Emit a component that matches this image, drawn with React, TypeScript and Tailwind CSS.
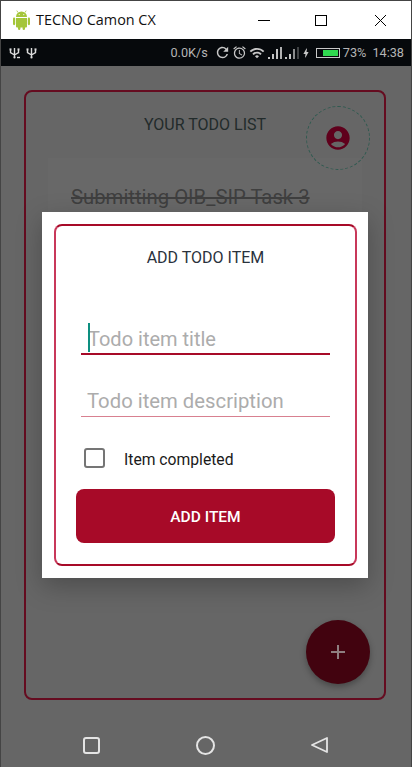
import { MdAccountCircle, MdAdd, MdAlarm, MdBolt, MdRefresh, MdWifi } from 'react-icons/md'

const ROBOTO = "font-['Roboto',sans-serif]"

function AndroidLogo() {
  return (
    <svg width="17" height="20" viewBox="0 0 17 20" className="text-[#a4c639]">
      <path d="M3 7a5.5 5.5 0 0 1 11 0z" fill="currentColor" />
      <path d="M5 2.5L3.8 .6M12 2.5L13.2 .6" stroke="currentColor" strokeWidth=".8" />
      <circle cx="6.2" cy="4.6" r=".6" fill="#fff" />
      <circle cx="10.8" cy="4.6" r=".6" fill="#fff" />
      <path d="M3 8h11v8.5a1 1 0 0 1-1 1H4a1 1 0 0 1-1-1z" fill="currentColor" />
      <rect x="0" y="7.6" width="2.2" height="7.6" rx="1.1" fill="currentColor" />
      <rect x="14.8" y="7.6" width="2.2" height="7.6" rx="1.1" fill="currentColor" />
      <rect x="5" y="15" width="2.4" height="5" rx="1.2" fill="currentColor" />
      <rect x="9.6" y="15" width="2.4" height="5" rx="1.2" fill="currentColor" />
    </svg>
  )
}

function UsbGlyph({ extra }: { extra?: boolean }) {
  return (
    <svg width="11" height="12" viewBox="0 0 11 12" fill="none" stroke="currentColor" strokeWidth="1.4">
      <path d="M5.5 1v9M5.5 8L1.5 5.5V3M5.5 8l4-2.5V3" />
      <circle cx="5.5" cy="10.4" r="1.1" fill="currentColor" stroke="none" />
      <rect x=".5" y="1.4" width="2" height="2" fill="currentColor" stroke="none" />
      <rect x="8.5" y="1.4" width="2" height="2" fill="currentColor" stroke="none" />
      {extra && <path d="M8 10.5h3" />}
    </svg>
  )
}

function SignalBars({ dim }: { dim?: boolean }) {
  return (
    <svg width="15" height="14" viewBox="0 0 15 14" className="text-[#c4c4c4]">
      <rect x="0" y="11" width="2" height="2" fill="currentColor" />
      <rect x="4" y="8" width="2" height="5" fill="currentColor" />
      <rect x="8" y="3" width="2" height="10" fill="currentColor" opacity={dim ? 0.7 : 1} />
      <rect x="12" y="1" width="2" height="12" fill="currentColor" opacity={dim ? 0.3 : 0.9} />
    </svg>
  )
}

function TitleBar() {
  return (
    <div className="flex h-[38px] shrink-0 items-center bg-white pl-[12px]">
      <AndroidLogo />
      <span className="ml-[6px] font-['Open_Sans',sans-serif] text-[14.4px] text-[#111]">TECNO Camon CX</span>
      <div className="ml-auto flex items-center pr-[24px]">
        <span className="h-px w-[12px] bg-black" />
        <span className="ml-[45px] h-[11px] w-[12px] border border-black" />
        <svg width="13" height="13" viewBox="0 0 13 13" className="ml-[47px] text-black">
          <path d="M1 1l11 11M12 1L1 12" stroke="currentColor" strokeWidth="1" />
        </svg>
      </div>
    </div>
  )
}

function StatusBar() {
  return (
    <div className={`flex h-[27px] shrink-0 items-center bg-[#06090c] pl-[8px] pr-[7px] text-[12.7px] text-[#b5b5b5] ${ROBOTO}`}>
      <span className="text-[#dcdcdc]">
        <UsbGlyph extra />
      </span>
      <span className="ml-[6px] text-[#dcdcdc]">
        <UsbGlyph />
      </span>
      <span className="ml-auto">0.0K/s</span>
      <MdRefresh className="ml-[6px] h-[17px] w-[17px] text-[#c8c8c8]" />
      <MdAlarm className="ml-px h-[15px] w-[15px] text-[#c8c8c8]" />
      <MdWifi className="ml-[2px] h-[16px] w-[16px] text-[#c8c8c8]" />
      <span className="ml-[3px]">
        <SignalBars />
      </span>
      <span className="ml-[2px]">
        <SignalBars dim />
      </span>
      <MdBolt className="h-[14px] w-[12px] text-[#c8c8c8]" />
      <span className="ml-[4px] flex h-[10px] w-[24px] items-stretch border border-[#c8c8c8] p-px">
        <span className="w-[5px]" />
        <span className="flex-1 bg-[#2fd94f]" />
      </span>
      <span className="ml-[3px]">73%</span>
      <span className="ml-[6px]">14:38</span>
    </div>
  )
}

function TodoScreen() {
  return (
    <div className="min-h-0 flex-1 pl-[23px] pr-[25px] pt-[24px]">
      <div className="relative h-[610px] rounded-[8px] border-2 border-[#650c20] px-[22px] pt-[21px]">
        <p className={`text-center text-[16px] leading-[24px] text-[#222b2b] ${ROBOTO}`}>YOUR TODO LIST</p>
        <button className="absolute right-[14px] top-[14px] flex h-[64px] w-[64px] items-center justify-center rounded-full border border-dashed border-[#2f5a50]">
          <MdAccountCircle className="h-[28px] w-[28px] text-[#5f001c]" />
        </button>
        <div className="mt-[21px] h-[200px] bg-[#686868] pl-[23px] pt-[25px]">
          <p className={`text-[20.3px] leading-[28px] text-[#3f3f3f] line-through ${ROBOTO}`}>Submitting OIB_SIP Task 3</p>
        </div>
        <button className="absolute bottom-[14px] right-[14px] flex h-[64px] w-[64px] items-center justify-center rounded-full bg-[#42030f] shadow-[0_3px_6px_rgba(0,0,0,0.3)]">
          <MdAdd className="h-[24px] w-[24px] text-[#8f7f80]" />
        </button>
      </div>
    </div>
  )
}

function NavBar() {
  return (
    <div className="flex h-[48px] shrink-0 items-center justify-between pl-[82px] pr-[82px] pt-[4px]">
      <span className="h-[17px] w-[17px] rounded-[3px] border-2 border-[#e4e4e4]" />
      <span className="h-[19px] w-[19px] rounded-full border-2 border-[#e4e4e4]" />
      <svg width="18" height="18" viewBox="0 0 18 18" className="text-[#e4e4e4]">
        <path d="M16 2v14L1 9z" fill="none" stroke="currentColor" strokeWidth="1.8" strokeLinejoin="round" />
      </svg>
    </div>
  )
}

function AddDialog() {
  return (
    <div className="absolute left-[41px] top-[212px] h-[366px] w-[326px] bg-white py-[12px] pl-[12px] pr-[11px] shadow-[0_8px_24px_rgba(0,0,0,0.25)]">
      <div className={`flex h-full flex-col rounded-[8px] border-2 border-[#a70a28] border-x-[#c8385a] px-[20px] ${ROBOTO}`}>
        <p className="mt-[22px] text-center text-[16px] leading-[20px] text-[#2a323c]">ADD TODO ITEM</p>
        <div className="relative mx-[5px] mt-[46px] h-[41px] border-b-2 border-[#a70a28] pl-[7px] pt-[10px] text-[20px] leading-[30px] text-[#acacac]">
          <span className="absolute left-[7px] top-[9px] h-[29px] w-[2px] bg-[#0d8f80]" />
          Todo item title
        </div>
        <div className="mx-[5px] mt-[21px] h-[41px] border-b border-[#d88090] pl-[6px] pt-[10px] text-[20.3px] leading-[30px] text-[#acacac]">
          Todo item description
        </div>
        <div className="mt-[31px] flex h-[20px] items-center pl-[8px]">
          <span className="h-[20px] w-[21px] rounded-[3px] border-2 border-[#757575]" />
          <span className="ml-[19px] pt-[3px] text-[15.7px] leading-[20px] text-[#1a1a1a]">Item completed</span>
        </div>
        <button className="mt-[21px] h-[54px] rounded-[8px] bg-[#a70a28] pt-[3px] text-[15.5px] font-medium text-white">ADD ITEM</button>
      </div>
    </div>
  )
}

export default function App() {
  return (
    <div className="relative flex h-[767px] w-[412px] flex-col overflow-hidden border-x border-[#444] bg-[#666666]">
      <div className="h-px shrink-0 bg-[#444]" />
      <TitleBar />
      <StatusBar />
      <TodoScreen />
      <NavBar />
      <AddDialog />
    </div>
  )
}
